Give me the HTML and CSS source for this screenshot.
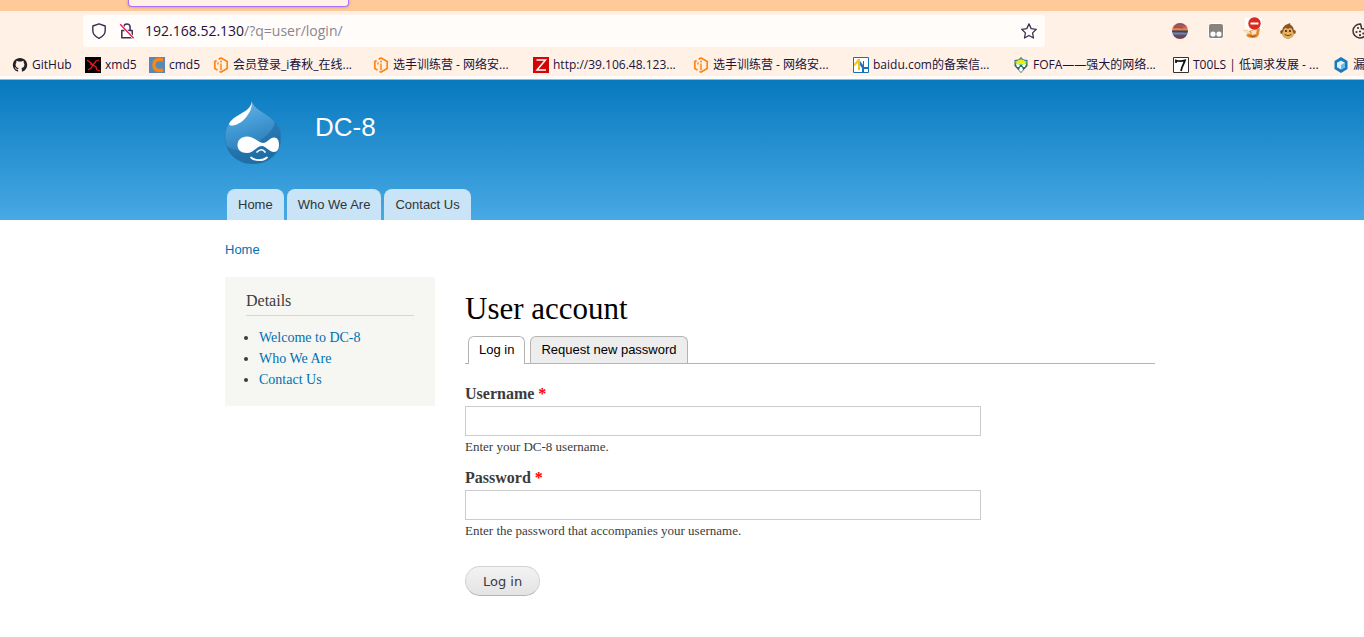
FILE: index.html
```html
<!DOCTYPE html>
<html lang="en">
<head>
<meta charset="utf-8">
<title>User account | DC-8</title>
<link rel="stylesheet" href="styles.css">
</head>
<body>
<svg class="defs" aria-hidden="true">
  <symbol id="hex-i" viewBox="0 0 16 16">
    <path d="M6.500 14.400 8 15l6.200-3.400V4.400L8 1 5.600 2.300M3.600 3.400 1.800 4.400v7.200l2.700 1.500" fill="none" stroke="#ff8412" stroke-width="1.700"/>
    <path d="M8 6.500V13M5 5.500v2" fill="none" stroke="#ff8412" stroke-width="1.500"/>
    <circle cx="8" cy="4.500" r="1" fill="#ff8412"/>
  </symbol>
</svg>

<div class="browser">
  <div class="tabstrip"><div class="active-tab"></div></div>
  <div class="toolbar">
    <div class="urlbar">
      <svg class="icon" viewBox="0 0 16 16"><path d="M8 .8 14.200 3v4.600c0 3.400-2.200 6-6.200 7.700C4 13.600 1.800 11 1.800 7.600V3z" fill="none" stroke="#3c2f55" stroke-width="1.400" stroke-linejoin="round"/></svg>
      <svg class="icon" viewBox="0 0 16 16"><path d="M2.800 7.500h10.400v7.300H2.800zM4.900 7.500V4a3.100 3.100 0 0 1 6.200 0v3.500" fill="none" stroke="#3c2f55" stroke-width="1.500" stroke-linejoin="round"/><path d="m1.200 1.200 13.400 14" stroke="#fff" stroke-width="2.800"/><path d="m1.200 1.200 13.400 14" stroke="#e2204f" stroke-width="1.400"/></svg>
      <span class="url"><b>192.168.52.130</b>/?q=user/login/</span>
      <svg class="icon" viewBox="0 0 16 16"><path d="m8 .9 2.200 4.700 5.100.7-3.700 3.600.9 5.100L8 12.500 3.500 15l.9-5.100L.7 6.300l5.100-.7z" fill="none" stroke="#3c2f55" stroke-width="1.300" stroke-linejoin="round"/></svg>
    </div>
    <div class="extensions">
      <svg class="icon" viewBox="0 0 16 16">
        <defs><linearGradient id="sunset" x1="0" y1="0" x2="0" y2="1"><stop offset="0" stop-color="#6b5276"/><stop offset=".2" stop-color="#b4564f"/><stop offset=".4" stop-color="#f5853d"/><stop offset=".52" stop-color="#31446e"/><stop offset=".65" stop-color="#8083a3"/><stop offset=".8" stop-color="#544b68"/><stop offset="1" stop-color="#823f3f"/></linearGradient></defs>
        <circle cx="8" cy="8" r="8" fill="url(#sunset)"/><path d="M2 4.500 6 4l5 1M0 8.500h10l5 1" stroke="#353c68" stroke-width=".6" fill="none"/>
      </svg>
      <svg class="icon" viewBox="0 0 16 16"><rect x=".5" y=".5" width="15" height="15" rx="2.500" fill="#87847f" stroke="#fff"/><circle cx="5" cy="11" r="2.600" fill="#fff"/><circle cx="11" cy="11" r="2.600" fill="#fff"/></svg>
      <svg class="icon fox" viewBox="0 0 20 22">
        <path d="M3 1h17v11H3z" fill="#fff"/>
        <path d="m1 13 6 1 8-2 3-1-1 6c-1 3-3 4-6 4-4 0-6-1-7-3l2-1z" fill="#e58a32"/>
        <path d="m1 13 6 1 2 3-5-1zM9 14l6-2-1 5-4 1z" fill="#f9e3be"/><path d="m6 18 4 1 5-1-3 2H9z" fill="#ac5721"/>
        <circle cx="12.500" cy="6.500" r="6.200" fill="#dc291e"/><path d="M8.500 5.500h8v2h-8z" fill="#fff"/>
      </svg>
      <svg class="icon" viewBox="0 0 16 16">
        <circle cx="2.200" cy="9" r="2.100" fill="#8b5421"/><circle cx="13.800" cy="9" r="2.100" fill="#8b5421"/>
        <path d="M8 1c2-2 3 0 2 .6C13 3 14 6 14 9c0 4-2.500 6.500-6 6.500S2 13 2 9c0-4 2-7 6-8z" fill="#8b5421"/>
        <path d="M8 6c2-2 4.500-.5 4.500 1.500 0 1 1.300 2 1.300 3.500C13.800 14 11 15.200 8 15.200S2.200 14 2.200 11c0-1.500 1.300-2.500 1.300-3.500C3.500 5.500 6 4 8 6z" fill="#e6b25d"/>
        <circle cx="6" cy="8" r="1" fill="#302015"/><circle cx="10" cy="8" r="1" fill="#302015"/><path d="M4.500 11.500q3.500 2.500 7 0" stroke="#714018" fill="none"/>
      </svg>
      <svg class="icon cookie" viewBox="0 0 16 16"><path d="M8.500 1A7 7 0 1 0 15 8.500l-2-.5-1-2-2.500-.5-.3-2z" fill="none" stroke="#3a3637" stroke-width="1.500"/><g fill="#3a3637"><circle cx="6" cy="5" r="1.100"/><circle cx="4.500" cy="9" r="1.100"/><circle cx="8" cy="8.500" r="1.100"/><circle cx="8" cy="12.200" r="1.100"/><circle cx="11.300" cy="10.500" r="1.100"/></g></svg>
    </div>
  </div>
  <nav class="bookmarks" aria-label="Bookmarks">
    <a class="bookmark medium" href="#"><svg class="icon" viewBox="0 0 16 16"><path d="M8 1a7 7 0 0 0-2.500 13.600c.4.100.6-.1.600-.4v-1.500c-1.800.4-2.500-.5-2.700-1.100-.2-.4-.4-.8-.8-1 .9-.3 1.500.4 1.700.8.500.8 1.200.7 1.900.5.100-.4.300-.7.500-.9-2-.2-3.100-1.200-3.100-3.300 0-.9.300-1.500.8-2-.1-.4-.2-1.100.1-1.900.8 0 1.400.4 1.900.8a6 6 0 0 1 3.200 0c.5-.4 1.100-.8 1.900-.8.300.8.200 1.500.1 1.900.5.500.8 1.100.8 2 0 2.100-1.100 3.100-3.100 3.300.4.300.6.800.6 1.500v1.700c0 .3.200.5.600.4A7 7 0 0 0 8 1z" fill="#222126"/></svg>GitHub</a>
    <a class="bookmark short" href="#"><svg class="icon" viewBox="0 0 16 16"><path d="M0 0h16v16H0z"/><path d="m2 3 4 3 2 2 3-4 3-1M3 13l3-2 2-3 3 2 1 3 3 1M6 5v3" fill="none" stroke="#e3191c" stroke-width="1.300"/></svg>xmd5</a>
    <a class="bookmark short" href="#"><svg class="icon" viewBox="0 0 16 16"><path d="M0 0h16v16H0z" fill="#5689b6"/><path d="M14 3.200C8 1.200 5 3.500 5 8s3 6.800 9 4.800" fill="none" stroke="#ff8412" stroke-width="3.400"/></svg>cmd5</a>
    <a class="bookmark" href="#"><svg class="icon"><use href="#hex-i"/></svg>会员登录_i春秋_在线...</a>
    <a class="bookmark" href="#"><svg class="icon"><use href="#hex-i"/></svg>选手训练营 - 网络安...</a>
    <a class="bookmark" href="#"><svg class="icon" viewBox="0 0 16 16"><path d="M0 0h16v16H0z" fill="#d30606"/><path d="M3.500 3h9L4 13h9" fill="none" stroke="#fff" stroke-width="1.500"/></svg>http://39.106.48.123...</a>
    <a class="bookmark" href="#"><svg class="icon"><use href="#hex-i"/></svg>选手训练营 - 网络安...</a>
    <a class="bookmark" href="#"><svg class="icon" viewBox="0 0 16 16"><path d="M.5.5h15v15H.5z" fill="#fff" stroke="#1671b8"/><path d="M1 7 5 2h2v11H5V6L1 9z" fill="#f4c315"/><path d="m7 4 3 4V4h1v6h4v2h-4v3H9v-4L7 8z" fill="#1671b8"/></svg>baidu.com的备案信...</a>
    <a class="bookmark" href="#"><svg class="icon" viewBox="0 0 16 16"><path d="m1.500 3 4-.5L8 0l2.500 2.500 4 .5v6L8 16 1.500 9z" fill="#34696a"/><path d="m2 4 4-1 2-2 2 2 4 1-1 4H3z" fill="#3ed2be"/><path d="m3 5 3-2h4l3 2-1 3-4-1-4 1z" fill="#f4ea13"/><path d="m3 7 4 1-1 2H4zm10 0L9 8l1 2h2zM7 10h2l1 3-2 2-2-2z" fill="#fff"/></svg>FOFA——强大的网络...</a>
    <a class="bookmark" href="#"><svg class="icon" viewBox="0 0 16 16"><path d="M.5.5h15v15H.5z" fill="#fff" stroke="#333"/><path d="M3 6V3.500c3 .8 6 .7 9-.2-1 4-3 5-4 10.700" fill="none" stroke="#111" stroke-width="1.800"/></svg>T00LS | 低调求发展 - ...</a>
    <a class="bookmark" href="#"><svg class="icon" viewBox="0 0 16 16"><path d="m8 0 6.500 4v8L8 16l-6.500-4V4z" fill="#1a79bb"/><path d="m8 3.500 4 2.200v4.600l-4 2.200-4-2.200V5.700z" fill="#d9f1ff"/><path d="m8 8 4-2.300v4.600l-4 2.200z" fill="#67bce9"/></svg>漏</a>
  </nav>
</div>

<header class="site-header">
  <div class="wrap">
    <a class="brand" href="#">
      <svg class="logo" viewBox="0 0 56 64" role="img" aria-label="Home">
        <defs>
          <linearGradient id="drop" x1="0" y1="0" x2=".3" y2="1"><stop offset="0" stop-color="#72b9e6"/><stop offset=".45" stop-color="#439bd5"/><stop offset="1" stop-color="#2372aa"/></linearGradient>
        </defs>
        <path d="M27 .5c1.500 7 8.500 10 15 14.500C51 21 56 28 56 37c0 16-12 27-28 27S0 52 0 36c0-10 6-17 13-21C20 11 26 8 27 .5z" fill="url(#drop)" stroke="#2879b0" stroke-width=".6"/>
        <path d="M50 22c4 5 5.500 10 5.500 15 0 15-11 26-27 26.500C14 63.500 4 56 1.500 46 12 54 26 50 34 42c6-6 14-10 16-20z" fill="#1e6ba4" opacity=".65"/>
        <path d="M27 1c-1 8-7 10-13 14C8 18 3 23 4.500 25c3 2 11-1 16-7 4-5 6.500-9 6.500-17z" fill="#fff"/>
        <path d="M12.500 45c0-5 4-8.500 9.500-8.500 7 0 12 6.500 16 6.500 4 0 7-5.500 11-5.500 3.500 0 5 3 5 7s-1.500 7.500-5 7.500c-5 0-8-6-12-6-5 0-9 7-15 7-6 0-9.500-3-9.500-8z" fill="#fff"/>
        <path d="M32 52c3-3 6-3 8 0M26 57.500c4 3.500 12 3.500 16 0" fill="none" stroke="#fff" stroke-width="1.700" stroke-linecap="round"/>
      </svg>
      <span class="site-name">DC-8</span>
    </a>
    <nav class="main-menu" aria-label="Main menu">
      <a href="#">Home</a>
      <a href="#">Who We Are</a>
      <a href="#">Contact Us</a>
    </nav>
  </div>
</header>

<div class="wrap">
  <nav class="breadcrumb" aria-label="Breadcrumb"><a href="#">Home</a></nav>
  <div class="columns">
    <aside class="sidebar">
      <h2>Details</h2>
      <ul>
        <li><a href="#">Welcome to DC-8</a></li>
        <li><a href="#">Who We Are</a></li>
        <li><a href="#">Contact Us</a></li>
      </ul>
    </aside>
    <main class="content">
      <h1>User account</h1>
      <nav class="tabs" aria-label="Account">
        <a class="active" href="#">Log in</a>
        <a href="#">Request new password</a>
      </nav>
      <form>
        <div class="field">
          <label for="name">Username <span class="required">*</span></label>
          <input id="name" type="text">
          <p>Enter your DC-8 username.</p>
        </div>
        <div class="field">
          <label for="pass">Password <span class="required">*</span></label>
          <input id="pass" type="password">
          <p>Enter the password that accompanies your username.</p>
        </div>
        <button type="submit">Log in</button>
      </form>
    </main>
  </div>
</div>
</body>
</html>
```
FILE: styles.css
```css
* { box-sizing: border-box; }

body {
  margin: 0;
  background: #fff;
  color: #3b3b3b;
  font-family: "Liberation Serif", Georgia, serif;
  overflow-x: hidden;
}

a { text-decoration: none; color: #0071b3; }

.defs { display: none; }

/* Browser frame */
.browser {
  background: #fff1e6;
  border-bottom: 1px solid #a9b4bd;
  font-family: "Open Sans", "Noto Sans CJK SC", sans-serif;
  color: #15141a;
}

.tabstrip {
  height: 11px;
  padding-left: 128px;
  background: #ffc999;
}

.active-tab {
  width: 221px;
  height: 7px;
  background: #fff1e6;
  border: 1px solid #ac70ff;
  border-top: 0;
  border-radius: 0 0 4px 4px;
  box-shadow: 0 0 3px rgba(90, 60, 30, .4);
}

.toolbar {
  display: flex;
  padding: 4px 0 4px 83px;
}

.urlbar {
  display: flex;
  flex: 1;
  align-items: center;
  gap: 12px;
  height: 32px;
  padding: 0 8px;
  border-radius: 4px;
  background: #fffcfa;
}

.icon {
  flex: none;
  width: 16px;
  height: 16px;
}

.url {
  flex: 1;
  margin-left: -2px;
  padding-bottom: 2px;
  font-size: 14px;
  color: #8a8690;
}

.url b { font-weight: 400; color: #20123a; }

.extensions {
  display: flex;
  flex: none;
  align-items: center;
  gap: 20px;
  width: 319px;
  padding-left: 127px;
  overflow: hidden;
}

.extensions .fox {
  width: 20px;
  height: 22px;
  margin: 0 -2px 6px;
}

.extensions .cookie { margin-left: 36px; }

.bookmarks {
  display: flex;
  height: 28px;
  padding: 3px 0 0 12px;
  border-bottom: 3px solid #fffdfb;
  overflow: hidden;
}

.bookmark {
  display: flex;
  flex: none;
  align-items: center;
  gap: 4px;
  width: 160px;
  font-size: 12px;
  line-height: 20px;
  white-space: nowrap;
  color: #20123a;
}

.bookmark.medium { width: 73px; }
.bookmark.short { width: 64px; }

/* Site header */
.wrap {
  max-width: 946px;
  margin: 0 auto;
  padding-left: 16px;
}

.site-header {
  background: linear-gradient(#0779bf, #48a9e4);
  font-family: "Liberation Sans", Arial, sans-serif;
}

.brand {
  display: flex;
  gap: 34px;
  padding-top: 20px;
  color: #fffeff;
}

.logo { width: 56px; height: 64px; }

.site-name {
  padding-top: 12px;
  font-size: 26px;
  line-height: 30px;
}

.main-menu {
  display: flex;
  gap: 3px;
  padding: 25px 0 0 2px;
}

.main-menu a {
  padding: 0 11px;
  border-radius: 8px 8px 0 0;
  background: #c8e4f6;
  color: #333;
  font-size: 13px;
  line-height: 31px;
}

/* Page body */
.breadcrumb {
  padding: 20px 0 17px;
  font: 13px/20px "Liberation Sans", Arial, sans-serif;
}

.columns {
  display: flex;
  align-items: flex-start;
  gap: 30px;
}

.sidebar {
  flex: none;
  width: 210px;
  padding: 14px 21px 16px;
  background: #f6f6f2;
}

.sidebar h2 {
  margin: 0 0 11px;
  padding-bottom: 4px;
  border-bottom: 1px solid #d6d6d6;
  font-size: 16px;
  font-weight: 400;
  line-height: 20px;
}

.sidebar ul {
  margin: 0;
  padding-left: 13px;
  font-size: 14px;
  line-height: 21px;
}

.content { flex: 1; }

.content h1 {
  margin: 0;
  padding: 14px 0 9px;
  color: #000;
  font-size: 31px;
  font-weight: 400;
  line-height: 36px;
}

.tabs {
  display: flex;
  gap: 5px;
  padding-left: 3px;
  border-bottom: 1px solid #b4b4b4;
  font: 13px/26px "Liberation Sans", Arial, sans-serif;
}

.tabs a {
  padding: 0 10px;
  border: 1px solid #b4b4b4;
  border-bottom: 0;
  border-radius: 6px 6px 0 0;
  background: #ededed;
  color: #000;
}

.tabs .active {
  margin-bottom: -1px;
  padding-bottom: 1px;
  background: #fff;
}

form { padding-top: 20px; }

.field { margin-bottom: 12px; }

.field label {
  display: block;
  margin-bottom: 2px;
  font-size: 16px;
  font-weight: 700;
  line-height: 20px;
}

.required { color: #f00; }

.field input {
  display: block;
  width: 100%;
  max-width: 516px;
  height: 30px;
  padding: 4px;
  border: 1px solid #ccc;
  background: #fff;
  font-size: 14px;
}

.field p {
  margin: 2px 0 0;
  font-size: 13px;
  line-height: 18px;
}

button {
  height: 30px;
  margin-top: 14px;
  padding: 0 17px;
  border: 1px solid #d2d2d2;
  border-bottom-color: #b4b4b4;
  border-radius: 15px;
  background: linear-gradient(#f3f3f3, #e3e3e3);
  color: #3a3a3a;
  font: 13px "DejaVu Sans", Verdana, sans-serif;
}
```
